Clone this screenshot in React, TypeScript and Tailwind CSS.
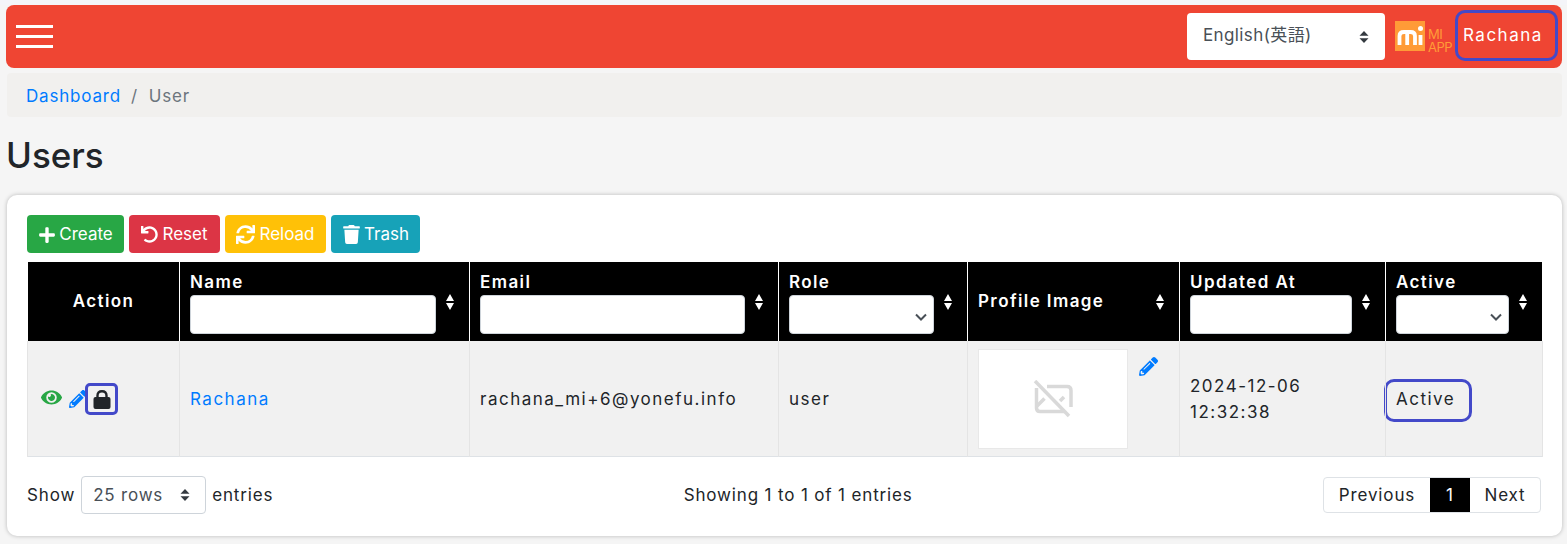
import React from 'react';
import { FaPlus, FaUndo, FaSync, FaTrash, FaEye, FaPencilAlt } from 'react-icons/fa';

const font = "font-['Inter','Noto_Sans_CJK_JP',sans-serif]";

function SortArrows() {
  return (
    <svg width="10" height="18" viewBox="0 0 10 18" className="shrink-0">
      <path d="M5 1 L9 8 L1 8 Z M1 10 L9 10 L5 17 Z" fill="#fff" />
    </svg>
  );
}

function UpDown() {
  return (
    <svg width="10" height="14" viewBox="0 0 10 14" className="absolute right-[16px] top-1/2 -translate-y-1/2 pointer-events-none">
      <path d="M5 1 L9.5 5.8 L0.5 5.8 Z M0.5 8.2 L9.5 8.2 L5 13 Z" fill="#343a40" />
    </svg>
  );
}

function LockIcon() {
  return (
    <svg width="18" height="19" viewBox="0 0 18 19">
      <path d="M4.500 9 V5.500 Q4.500 1.200 9 1.200 Q13.500 1.200 13.500 5.500 V9" fill="none" stroke="#212529" strokeWidth="2.400" />
      <rect x="0.500" y="7" width="17" height="12" rx="2" fill="#212529" />
    </svg>
  );
}

function HeaderInput() {
  return <input className="block w-full h-[39px] bg-white rounded-[4px] border border-[#ced4da]" />;
}

function HeaderSelect() {
  return (
    <div className="relative w-full">
      <select className="block w-full h-[39px] bg-white rounded-[4px] border border-[#ced4da] appearance-none" />
      <svg width="12" height="8" viewBox="0 0 12 8" className="absolute right-[7px] top-[18px] pointer-events-none">
        <path d="M1 1.500 L6 6.500 L11 1.500" fill="none" stroke="#495057" strokeWidth="2" />
      </svg>
    </div>
  );
}

function Th({ label, children, width }: { label: string; children?: React.ReactNode; width: string }) {
  return (
    <th className={`${width} border-x border-white bg-black p-0 font-semibold text-white text-left`}>
      <div className="flex items-center gap-[9px] pl-[10px] pr-[14px]">
        <div className={`flex-1 min-w-0 ${children ? '' : 'pb-[2px]'}`}>
          <div className={`text-[17px] leading-[24px] tracking-[1.4px] ${children ? 'mb-[1px]' : ''}`}>{label}</div>
          {children}
        </div>
        <SortArrows />
      </div>
    </th>
  );
}

export default function App() {
  return (
    <div className={`${font} w-[1567px] h-[544px] overflow-hidden bg-[#f5f5f5] text-[#212529]`}>
      <div className="h-[5px] bg-[#f4f5f9]" />
      <header className="h-[63px] ml-[6px] mr-[5px] rounded-[8px] bg-[#ef4533] flex items-center pl-[10px]">
        <div className="flex flex-col gap-[7px] w-[37px]">
          <span className="h-[3px] bg-white" />
          <span className="h-[3px] bg-white" />
          <span className="h-[3px] bg-white" />
        </div>
        <div className="ml-auto flex items-center">
          <div className="relative w-[198px]">
            <select className="block w-full h-[47px] pl-[16px] pb-[1px] rounded-[4px] bg-white text-[17px] tracking-[0.4px] text-[#495057] appearance-none" defaultValue="en">
              <option value="en">English(英語)</option>
            </select>
            <UpDown />
          </div>
          <div className="ml-[10px] mt-[2px] flex items-start">
            <svg width="30" height="30" viewBox="0 0 30 30">
              <rect width="30" height="30" fill="#ff9b37" />
              <path d="M4.500 24 V15 Q4.500 11 9 11 H15.500 Q20 11 20 15 V24 M12.200 24 V12" fill="none" stroke="#fff" strokeWidth="3.800" />
              <path d="M25.500 14 V24" fill="none" stroke="#fff" strokeWidth="3.800" />
              <circle cx="25.500" cy="7.500" r="2.500" fill="#fff" />
            </svg>
            <div className="ml-[3px] mt-[7px] text-[13px] leading-[13px] tracking-[-0.5px] text-[#ff9b37]">
              <div>MI</div>
              <div>APP</div>
            </div>
          </div>
          <div className="ml-[3px] mr-[4px] mb-[2px] w-[103px] h-[51px] rounded-[10px] border-[3px] border-[#4349c9] flex items-center pl-[5px] pt-[1px] text-white text-[17px] tracking-[1.5px]">
            Rachana
          </div>
        </div>
      </header>

      <nav className="mt-[5px] ml-[7px] mr-[5px] h-[44px] rounded-[4px] bg-[#f1f0ee] flex items-center pl-[19px] pt-[3px] text-[17px] tracking-[0.8px]">
        <a className="text-[#007bff]">Dashboard</a>
        <span className="pl-[10px] pr-[11px] text-[#6c757d]">/</span>
        <span className="text-[#6c757d]">User</span>
      </nav>

      <h1 className="mt-[17px] ml-[6px] text-[35px] leading-[43px] font-medium">Users</h1>

      <section className="mt-[18px] ml-[7px] mr-[5px] h-[341px] rounded-[10px] bg-white shadow-[0_0_4px_rgba(0,0,0,0.25)] pt-[20px] px-[20px]">
        <div className="flex gap-[5px] h-[38px] text-white text-[17px]">
          <button className="h-full w-[97px] pt-[1px] rounded-[4px] bg-[#28a745] flex items-center justify-center gap-[3px]"><FaPlus size={18} />Create</button>
          <button className="h-full w-[91px] pt-[1px] rounded-[4px] bg-[#dc3545] flex items-center justify-center gap-[4px]"><FaUndo size={17} />Reset</button>
          <button className="h-full w-[101px] pt-[1px] rounded-[4px] bg-[#ffc107] flex items-center justify-center gap-[4px]"><FaSync size={19} />Reload</button>
          <button className="h-full w-[89px] pt-[1px] rounded-[4px] bg-[#17a2b8] flex items-center justify-center gap-[3px]"><FaTrash size={19} />Trash</button>
        </div>

        <table className="mt-[9px] w-[1515px] table-fixed border-collapse text-[17px] tracking-[1.5px]">
          <thead>
            <tr className="h-[79px]">
              <th className="w-[152px] border-x border-white bg-black p-0 font-semibold tracking-[1.4px] text-white text-center">Action</th>
              <Th label="Name" width="w-[290px]"><HeaderInput /></Th>
              <Th label="Email" width="w-[309px]"><HeaderInput /></Th>
              <Th label="Role" width="w-[189px]"><HeaderSelect /></Th>
              <Th label="Profile Image" width="w-[212px]" />
              <Th label="Updated At" width="w-[206px]"><HeaderInput /></Th>
              <Th label="Active" width="w-[157px]"><HeaderSelect /></Th>
            </tr>
          </thead>
          <tbody>
            <tr className="h-[115px] bg-[#f1f1f1] border-b border-[#dee2e6]">
              <td className="border-x border-[#e4e4e4] p-0 pt-[2px]">
                <div className="flex items-center pl-[13px]">
                  <FaEye size={21} className="text-[#28a745] -mt-[3px]" />
                  <FaPencilAlt size={18} className="ml-[7px] text-[#007bff]" />
                  <span className="-ml-[2px] w-[33px] h-[32px] rounded-[5px] border-[3px] border-[#4349c9] flex items-center justify-center">
                    <LockIcon />
                  </span>
                </div>
              </td>
              <td className="border-x border-[#e4e4e4] px-[10px] pt-[2px] text-[#007bff]">Rachana</td>
              <td className="border-x border-[#e4e4e4] px-[10px] pt-[2px]">rachana_mi+6@yonefu.info</td>
              <td className="border-x border-[#e4e4e4] px-[10px] pt-[2px]">user</td>
              <td className="border-x border-[#e4e4e4] p-0 pt-[2px]">
                <div className="flex items-start pl-[10px]">
                  <div className="w-[150px] h-[100px] bg-white border border-[#e8e8e8] flex items-center justify-center">
                    <svg width="40" height="38" viewBox="0 0 40 38" fill="none" stroke="#d9d9d9" strokeWidth="3.500">
                      <path d="M2 1 L36 36" />
                      <path d="M14 6.500 H34 Q38 6.500 38 10.500 V27" />
                      <path d="M31 31.500 H7 Q3.500 31.500 3.500 28 V8" />
                      <path d="M4 26 L11.500 18.500" />
                      <path d="M27 21 L31 17" />
                    </svg>
                  </div>
                  <FaPencilAlt size={19} className="ml-[11px] mt-[8px] text-[#007bff]" />
                </div>
              </td>
              <td className="border-x border-[#e4e4e4] px-[10px] pt-[2px] leading-[26px]">2024-12-06<br />12:32:38</td>
              <td className="border-x border-[#e4e4e4] p-0 pt-[2px]">
                <span className="-ml-[2px] mt-[2px] w-[88px] h-[43px] rounded-[10px] border-[3px] border-[#4349c9] flex items-center pl-[9px] pb-[2px]">Active</span>
              </td>
            </tr>
          </tbody>
        </table>

        <div className="mt-[19px] w-[1515px] flex justify-between items-center text-[17px] tracking-[0.85px]">
          <div className="flex items-center gap-[6px]">
            <span className="pt-[3px]">Show</span>
            <div className="relative w-[125px]">
              <select className="block w-full h-[38px] pl-[11px] pt-[2px] rounded-[4px] border border-[#ced4da] bg-white text-[#495057] tracking-[0.8px] appearance-none" defaultValue="25">
                <option value="25">25 rows</option>
              </select>
              <UpDown />
            </div>
            <span className="pt-[3px]">entries</span>
          </div>
          <div className="pt-[3px]">Showing 1 to 1 of 1 entries</div>
          <div className="flex h-[36px] mr-[1px] items-center rounded-[4px] border border-[#dee2e6] overflow-hidden">
            <span className="w-[106px] pt-[3px] text-center">Previous</span>
            <span className="w-[40px] h-full pt-[3px] bg-black text-white flex items-center justify-center">1</span>
            <span className="w-[70px] pt-[3px] text-center">Next</span>
          </div>
        </div>
      </section>
    </div>
  );
}
